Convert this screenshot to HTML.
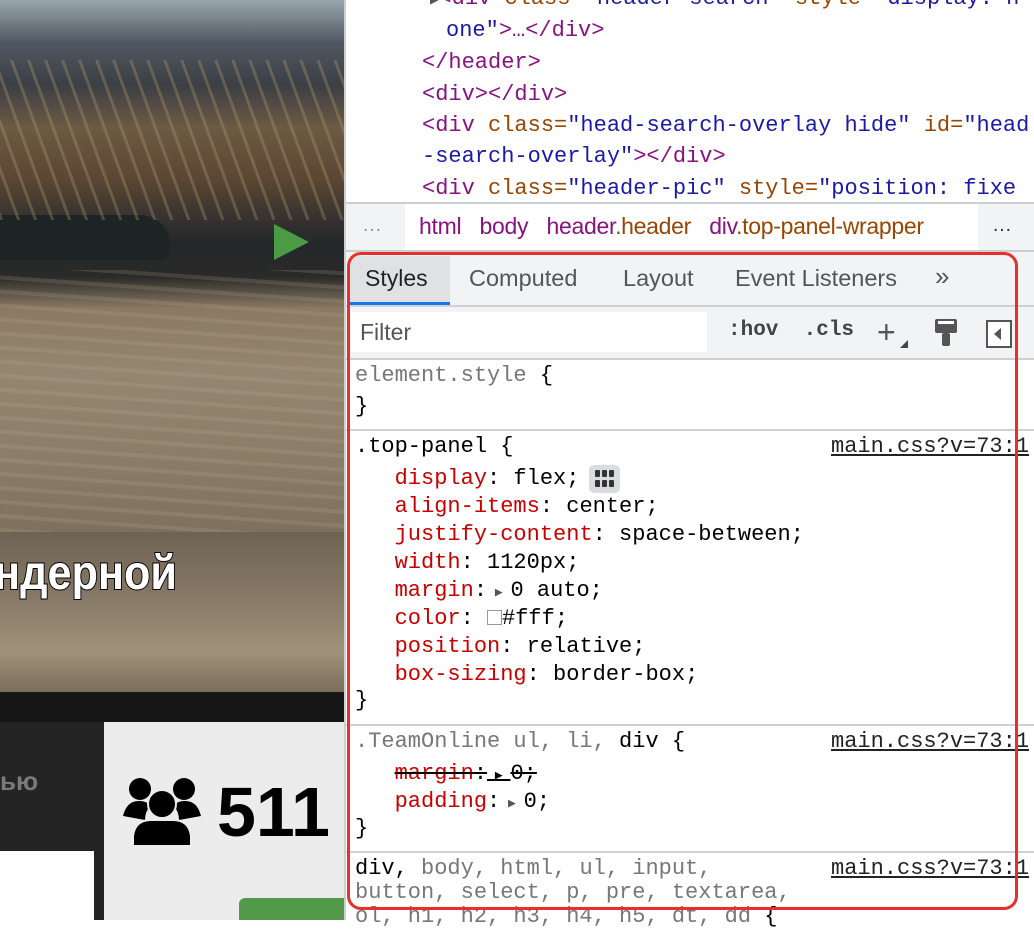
<!DOCTYPE html>
<html><head><meta charset="utf-8"><style>
*{margin:0;padding:0;box-sizing:border-box}
body{width:1034px;height:920px;overflow:hidden;background:#fff;position:relative;font-family:"Liberation Sans",sans-serif}
.abs{position:absolute}
.mono{font-family:"Liberation Mono","DejaVu Sans Mono",monospace;font-size:22px;white-space:pre}
.tag{color:#881280}.an{color:#994500}.av{color:#1a1aa6}
.p{color:#c80000}.g{color:#777}
.ln{position:absolute;left:355px;line-height:28px}
.src{position:absolute;left:831px;text-decoration:underline;color:#222;line-height:28px}
.sep{position:absolute;left:345px;width:689px;height:2px;background:#d0d0d0}
</style></head><body>
<!-- left photo -->
<div class="abs" style="left:0;top:0;width:344px;height:532px;background:
linear-gradient(180deg,#9aa6ae 0%,#4f5862 8%,#3c3f44 16%,#6c5a44 24%,#5a4632 34%,#3a3530 40%,#23272a 46%,#2a2a28 52%,#8a7a64 58%,#958670 70%,#8c7d68 85%,#7e705c 100%);overflow:hidden">
<div class="abs" style="left:0;top:215px;width:170px;height:45px;background:#1e2426;border-radius:0 30px 10px 0"></div>
<div class="abs" style="left:0;top:60px;width:344px;height:160px;background:repeating-linear-gradient(70deg,rgba(190,160,115,.3) 0 3px,transparent 3px 16px)"></div>
<div class="abs" style="left:0;top:270px;width:344px;height:262px;background:repeating-linear-gradient(4deg,rgba(190,175,150,.18) 0 4px,transparent 4px 14px)"></div>
<svg class="abs" style="left:273px;top:223px" width="38" height="38"><polygon points="1,1 36,19 1,37" fill="#4d9a44"/></svg>
</div>
<div class="abs" style="left:0;top:532px;width:344px;height:160px;background:linear-gradient(180deg,#6e6352,#857866 40%,#a09279 75%,#7a6e5a)"></div>
<div class="abs" style="left:-6px;top:546px;font-size:48px;font-weight:bold;color:#fff;-webkit-text-stroke:2px #000;paint-order:stroke fill;transform:scaleX(.9);transform-origin:0 0;white-space:nowrap">ндерной</div>
<div class="abs" style="left:0;top:692px;width:344px;height:30px;background:#161616"></div>
<div class="abs" style="left:0;top:722px;width:104px;height:198px;background:#242424"></div>
<div class="abs" style="left:0;top:766px;font-size:26px;font-weight:bold;color:#7a7a7a">ью</div>
<div class="abs" style="left:0;top:851px;width:94px;height:69px;background:#fff"></div>
<div class="abs" style="left:104px;top:722px;width:240px;height:198px;background:#ececec"></div>
<svg class="abs" style="left:123px;top:776px" width="78" height="72" viewBox="0 0 78 72">
<circle cx="17" cy="13" r="11"/><circle cx="61" cy="13" r="11"/>
<path d="M0 40 Q4 24 17 25 Q24 25 27 30 Q22 36 22 44 Z"/><path d="M78 40 Q74 24 61 25 Q54 25 51 30 Q56 36 56 44 Z"/>
<circle cx="39" cy="28" r="14" stroke="#ececec" stroke-width="2"/>
<path d="M10 70 L10 60 Q12 44 28 44 L50 44 Q66 44 68 60 L68 70 Z" stroke="#ececec" stroke-width="2"/>
</svg>
<div class="abs" style="left:217px;top:772px;font-size:70px;font-weight:bold;color:#000">511</div>
<div class="abs" style="left:239px;top:898px;width:105px;height:22px;background:#529a4a;border-radius:6px 0 0 0"></div>
<!-- devtools -->
<div class="abs" style="left:344px;top:0;width:2px;height:920px;background:#cfcfcf"></div>
<div class="mono abs" style="left:346px;top:0;width:688px;height:203px;overflow:hidden">
<div class="ln" style="left:84px;top:-15px"><span style="color:#555;font-size:14px">▶</span><span class="tag">&lt;div</span> <span class="an">class=</span><span class="av">"header-search"</span> <span class="an">style=</span><span class="av">"display: n</span></div>
<div class="ln" style="left:100px;top:17px"><span class="av">one"</span><span class="tag">&gt;…&lt;/div&gt;</span></div>
<div class="ln" style="left:76px;top:49px"><span class="tag">&lt;/header&gt;</span></div>
<div class="ln" style="left:76px;top:81px"><span class="tag">&lt;div&gt;&lt;/div&gt;</span></div>
<div class="ln" style="left:76px;top:112px"><span class="tag">&lt;div</span> <span class="an">class=</span><span class="av">"head-search-overlay hide"</span> <span class="an">id=</span><span class="av">"head</span></div>
<div class="ln" style="left:76px;top:143px"><span class="av">-search-overlay"</span><span class="tag">&gt;&lt;/div&gt;</span></div>
<div class="ln" style="left:76px;top:175px"><span class="tag">&lt;div</span> <span class="an">class=</span><span class="av">"header-pic"</span> <span class="an">style=</span><span class="av">"position: fixe</span></div>
</div>
<div class="abs" style="left:346px;top:202px;width:688px;height:2px;background:#cacdd1"></div>
<div class="abs" style="left:346px;top:204px;width:688px;height:46px;background:#f1f3f4"></div>
<div class="abs" style="left:405px;top:204px;width:573px;height:46px;background:#fff"></div>
<div class="abs" style="left:362px;top:214px;font-size:20px;color:#999">…</div>
<div class="abs" style="left:992px;top:214px;font-size:20px;color:#333">…</div>
<div class="abs" style="left:419px;top:213px;font-size:23px;white-space:nowrap;width:557px;overflow:hidden;letter-spacing:-0.3px"><span class="tag">html</span>&nbsp;&nbsp;&nbsp;<span class="tag">body</span>&nbsp;&nbsp;&nbsp;<span class="tag">header</span><span class="an">.header</span>&nbsp;&nbsp;&nbsp;<span class="tag">div</span><span class="an">.top-panel-wrapper</span></div>
<div class="abs" style="left:346px;top:250px;width:688px;height:2px;background:#cacdd1"></div>
<div class="abs" style="left:346px;top:252px;width:688px;height:53px;background:#f1f3f4"></div>
<div class="abs" style="left:350px;top:256px;width:100px;height:46px;background:#dfe1e5"></div>
<div class="abs" style="left:350px;top:302px;width:100px;height:3px;background:#1a73e8"></div>
<div class="abs" style="left:346px;top:305px;width:688px;height:2px;background:#d0d0d0"></div>
<div class="abs" style="left:365px;top:265px;font-size:23px;color:#222;white-space:nowrap">Styles</div>
<div class="abs" style="left:469px;top:265px;font-size:23.5px;color:#555">Computed</div>
<div class="abs" style="left:623px;top:265px;font-size:23.5px;color:#555">Layout</div>
<div class="abs" style="left:735px;top:265px;font-size:23.5px;color:#555">Event Listeners</div>
<div class="abs" style="left:935px;top:261px;font-size:26px;color:#555">»</div>
<div class="abs" style="left:346px;top:307px;width:688px;height:51px;background:#f1f3f4"></div>
<div class="abs" style="left:351px;top:312px;width:356px;height:40px;background:#fff"></div>
<div class="abs" style="left:360px;top:319px;font-size:23px;color:#555">Filter</div>
<div class="abs mono" style="left:728px;top:319px;font-weight:bold;color:#444;font-size:21px">:hov  .cls</div>
<div class="abs" style="left:877px;top:312px;font-size:32px;color:#555;line-height:40px">+</div>
<div class="abs" style="left:900px;top:340px;width:0;height:0;border-left:8px solid transparent;border-bottom:8px solid #444"></div>
<svg class="abs" style="left:933px;top:318px" width="26" height="30"><rect x="2" y="1" width="22" height="14" rx="2" fill="#555"/><rect x="5" y="3" width="16" height="3" fill="#fff"/><rect x="9" y="15" width="8" height="13" rx="2" fill="#555"/></svg>
<svg class="abs" style="left:986px;top:320px" width="28" height="28"><rect x="1" y="1" width="24" height="26" fill="#fff" stroke="#555" stroke-width="2"/><polygon points="15,8 8,14 15,20" fill="#555"/></svg>
<div class="abs" style="left:346px;top:358px;width:688px;height:2px;background:#d0d0d0"></div>
<div class="mono">
<div class="ln" style="top:362px"><span class="g">element.style</span> {</div>
<div class="ln" style="top:393px">}</div>
<div class="sep" style="top:429px"></div>
<div class="ln" style="top:433px">.top-panel {</div>
<div class="src" style="top:433px">main.css?v=73:1</div>
<div class="ln" style="top:465px">   <span class="p">display</span>: flex; </div>
<div class="abs" style="left:589px;top:465px;width:31px;height:28px;background:#dadce0;border-radius:5px"></div>
<svg class="abs" style="left:595px;top:470px" width="20" height="18"><g fill="#333"><rect x="0" y="0" width="5" height="7" rx="1"/><rect x="7" y="0" width="5" height="7" rx="1"/><rect x="14" y="0" width="5" height="7" rx="1"/><rect x="0" y="10" width="5" height="7" rx="1"/><rect x="7" y="10" width="5" height="7" rx="1"/><rect x="14" y="10" width="5" height="7" rx="1"/></g></svg>
<div class="ln" style="top:493px">   <span class="p">align-items</span>: center;</div>
<div class="ln" style="top:521px">   <span class="p">justify-content</span>: space-between;</div>
<div class="ln" style="top:549px">   <span class="p">width</span>: 1120px;</div>
<div class="ln" style="top:577px">   <span class="p">margin</span>:<span style="font-size:13px;color:#555"> ▶ </span>0 auto;</div>
<div class="ln" style="top:605px">   <span class="p">color</span>: <span style="display:inline-block;width:15px;height:15px;border:1px solid #999;vertical-align:-1px"></span>#fff;</div>
<div class="ln" style="top:633px">   <span class="p">position</span>: relative;</div>
<div class="ln" style="top:661px">   <span class="p">box-sizing</span>: border-box;</div>
<div class="ln" style="top:687px">}</div>
<div class="sep" style="top:724px"></div>
<div class="ln" style="top:728px"><span class="g">.TeamOnline ul, li,</span> div {</div>
<div class="src" style="top:728px">main.css?v=73:1</div>
<div class="ln" style="top:760px">   <span style="text-decoration:line-through"><span class="p">margin</span>:<span style="font-size:13px"> ▶ </span>0;</span></div>
<div class="ln" style="top:788px">   <span class="p">padding</span>:<span style="font-size:13px;color:#555"> ▶ </span>0;</div>
<div class="ln" style="top:815px">}</div>
<div class="sep" style="top:851px"></div>
<div class="ln" style="top:855px">div, <span class="g">body, html, ul, input,</span></div>
<div class="src" style="top:855px">main.css?v=73:1</div>
<div class="ln" style="top:879px"><span class="g">button, select, p, pre, textarea,</span></div>
<div class="ln" style="top:903px"><span class="g">ol, h1, h2, h3, h4, h5, dt, dd</span> {</div>
</div>
<div class="abs" style="left:347px;top:252px;width:671px;height:658px;border:3px solid #e8302a;border-radius:14px"></div>
</body></html>
